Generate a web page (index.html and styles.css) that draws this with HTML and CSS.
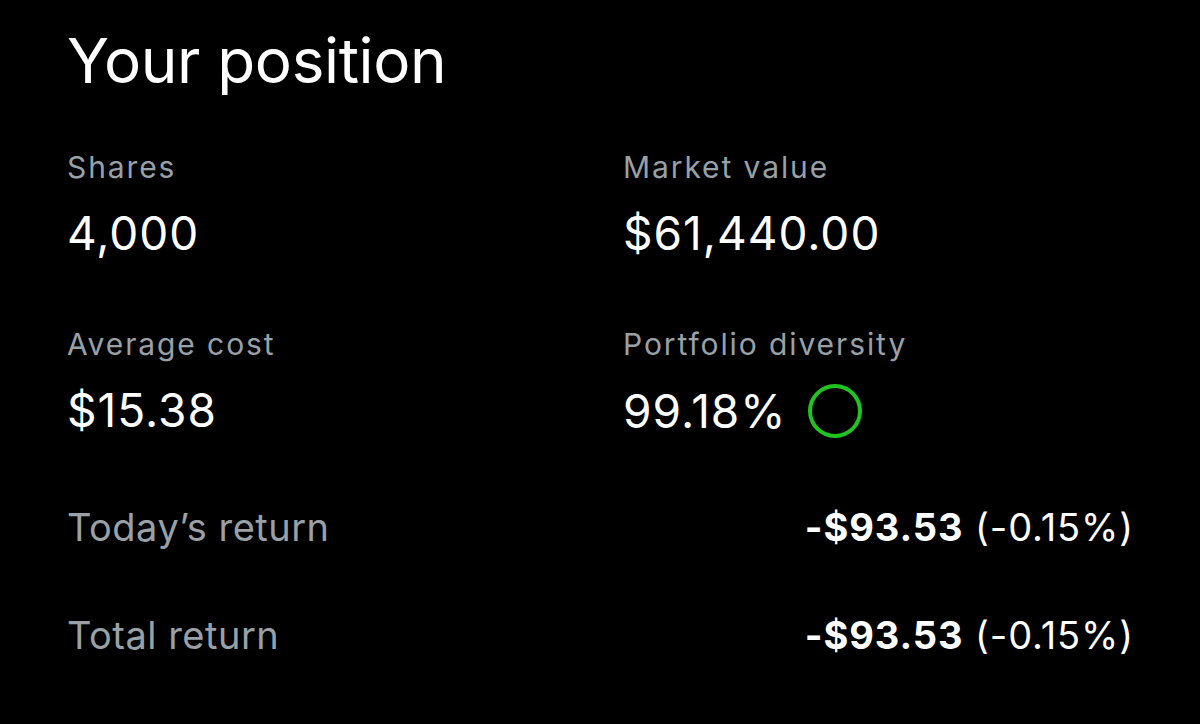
FILE: index.html
```html
<!DOCTYPE html>
<html lang="en">
<head>
  <meta charset="UTF-8">
  <meta name="viewport" content="width=device-width, initial-scale=1.0">
  <title>Your position</title>
  <link rel="stylesheet" href="styles.css">
</head>
<body>
  <div class="position">
    <h1 class="position-title">Your position</h1>

    <!-- Stats grid -->
    <div class="stats">
      <div class="stat">
        <div class="stat-label">Shares</div>
        <div class="stat-value">4,000</div>
      </div>
      <div class="stat">
        <div class="stat-label">Market value</div>
        <div class="stat-value">$61,440.00</div>
      </div>
      <div class="stat">
        <div class="stat-label">Average cost</div>
        <div class="stat-value">$15.38</div>
      </div>
      <div class="stat">
        <div class="stat-label">Portfolio diversity</div>
        <div class="stat-value">
          99.18%
          <svg class="diversity-ring" width="54" height="54" viewBox="0 0 54 54" fill="none" xmlns="http://www.w3.org/2000/svg">
            <circle cx="27" cy="27" r="25" stroke="#20c420" stroke-width="4"/>
          </svg>
        </div>
      </div>
    </div>

    <!-- Returns -->
    <div class="return-row">
      <span class="return-label">Today’s return</span>
      <span class="return-value"><b>-$93.53</b> (-0.15%)</span>
    </div>
    <div class="return-row">
      <span class="return-label">Total return</span>
      <span class="return-value"><b>-$93.53</b> (-0.15%)</span>
    </div>
  </div>
</body>
</html>
```

FILE: styles.css
```css
body {
  margin: 0;
  background-color: #000;
  color: #fff;
  font-family: Inter, 'Noto Sans', sans-serif;
}

.position {
  padding: 25px 66px 0 67px;
}

.position-title {
  font-size: 62px;
  font-weight: 400;
  line-height: 72px;
  letter-spacing: -0.35px;
  margin: 0 0 52px 0;
}

.stats {
  display: grid;
  grid-template-columns: 556px 1fr;
  row-gap: 67px;
}

.stat-label {
  font-size: 30px;
  line-height: 36px;
  letter-spacing: 1.9px;
  color: #99a1a7;
}

.stat-value {
  display: flex;
  align-items: center;
  gap: 24px;
  font-size: 46px;
  line-height: 52px;
  letter-spacing: 1px;
  margin-top: 22px;
}

.diversity-ring {
  flex-shrink: 0;
  margin-left: -3px;
}

.return-row {
  display: flex;
  justify-content: space-between;
  align-items: baseline;
  font-size: 38px;
  line-height: 44px;
  margin-top: 67px;
}

.return-row + .return-row {
  margin-top: 64px;
}

.return-label {
  color: #99a1a7;
  letter-spacing: 0.5px;
}

.return-value {
  letter-spacing: 0.9px;
}

.return-value b {
  font-weight: 700;
}
```
